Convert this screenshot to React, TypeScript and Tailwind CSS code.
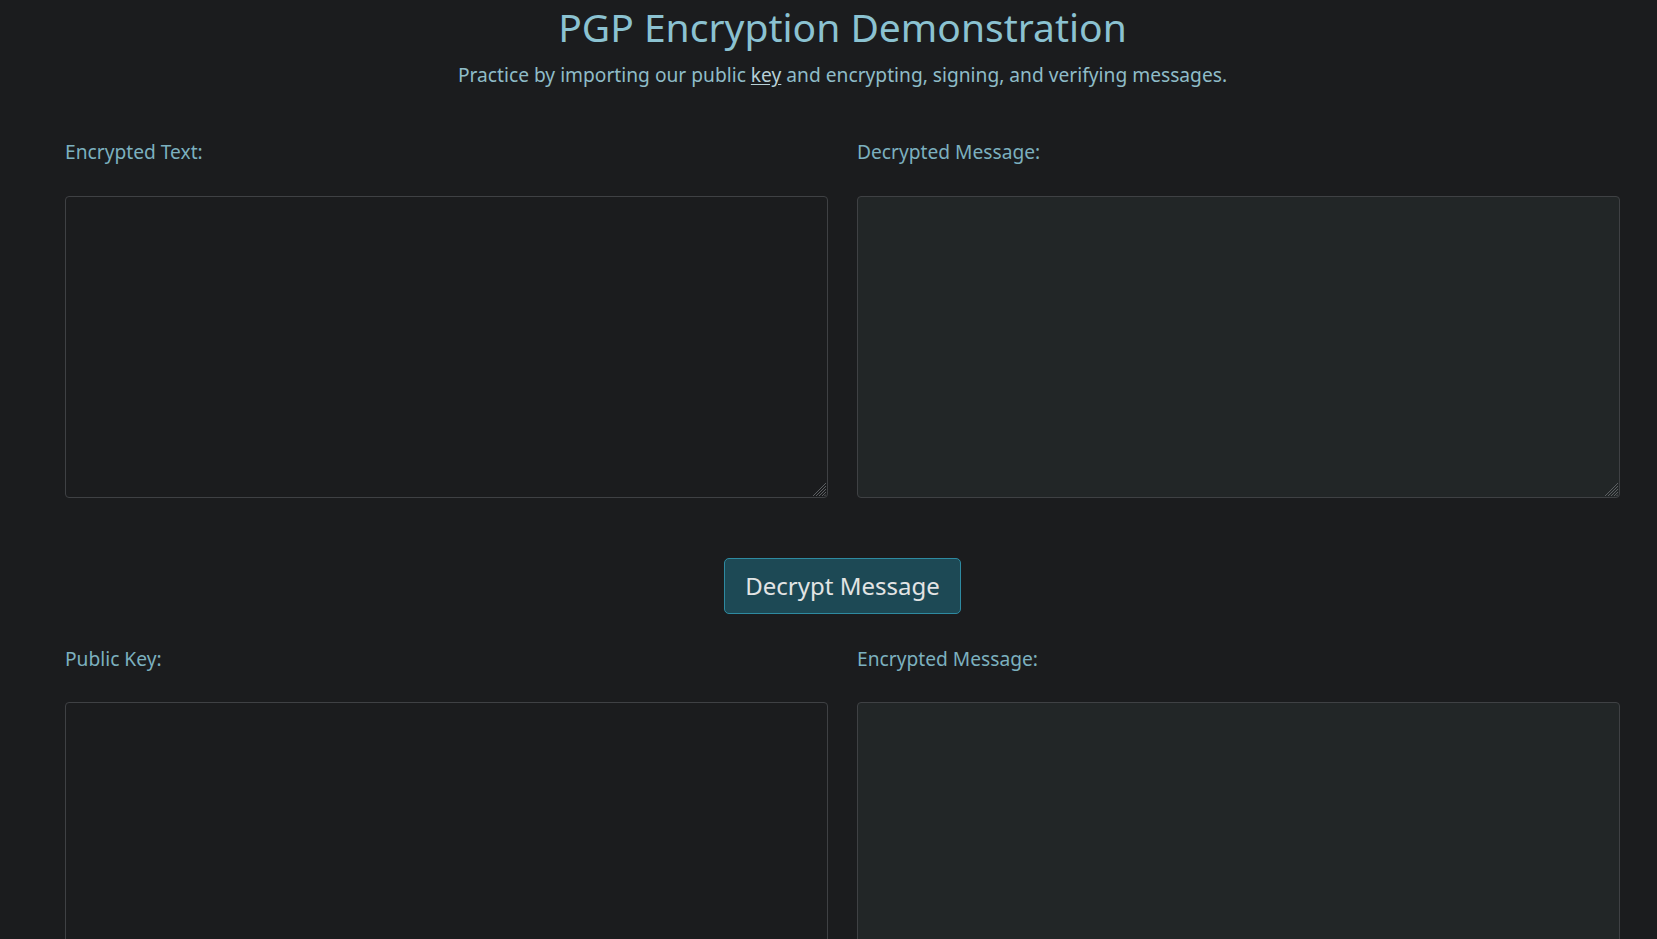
function Grip() {
  // hatched resize corner drawn over the textarea
  return (
    <svg
      className="pointer-events-none absolute bottom-[2px] right-[2px]"
      width="14"
      height="14"
      viewBox="0 0 14 14"
    >
      <path
        d="M14 1 L1 14 M14 4 L4 14 M14 7 L7 14 M14 10 L10 14 M14 12.5 L12.5 14"
        stroke="#5c5f62"
        strokeWidth="1"
      />
    </svg>
  );
}

function Field({ label, tint, tight }: { label: string; tint: boolean; tight?: boolean }) {
  return (
    <div>
      <label className="block text-[19.2px] leading-[28px] text-[#7cb0bf]">
        {label}
      </label>
      <div className={`relative ${tight ? 'mt-[29px]' : 'mt-[30px]'}`}>
        <textarea
          readOnly={tint}
          className={`block h-[302px] w-full resize-none rounded-[4px] border border-[#3f4144] p-2 text-[#d0d0d0] ${
            tint ? 'bg-[#222627]' : 'bg-[#1b1c1e]'
          }`}
        />
        <Grip />
      </div>
    </div>
  );
}

export default function App() {
  const font = { fontFamily: '"Noto Sans", "Open Sans", sans-serif' };

  return (
    <div
      className="min-h-screen bg-[#1b1c1e] pl-[65px] pr-[37px] pt-[4px]"
      style={font}
    >
      {/* header */}
      <h1 className="text-center text-[39px] leading-[46px] text-[#8bc2d1]">
        PGP Encryption Demonstration
      </h1>
      <p className="mt-[11px] text-center text-[19.2px] leading-[28px] text-[#8fbcc8]">
        Practice by importing our public{' '}
        <a href="#" className="text-[#b7d0d8] underline underline-offset-2">
          key
        </a>{' '}
        and encrypting, signing, and verifying messages.
      </p>

      {/* decrypt section */}
      <div className="mt-[49px] grid grid-cols-2 gap-[29px]">
        <Field label="Encrypted Text:" tint={false} />
        <Field label="Decrypted Message:" tint />
      </div>

      <div className="mt-[60px] flex justify-center">
        <button className="rounded-[5px] border border-[#2e8aa1] bg-[#1d4955] px-[20px] py-[9px] text-[24px] leading-[36px] text-[#e2e4e4]">
          Decrypt Message
        </button>
      </div>

      {/* encrypt section */}
      <div className="mt-[31px] grid grid-cols-2 gap-[29px]">
        <Field label="Public Key:" tint={false} tight />
        <Field label="Encrypted Message:" tint tight />
      </div>
    </div>
  );
}
